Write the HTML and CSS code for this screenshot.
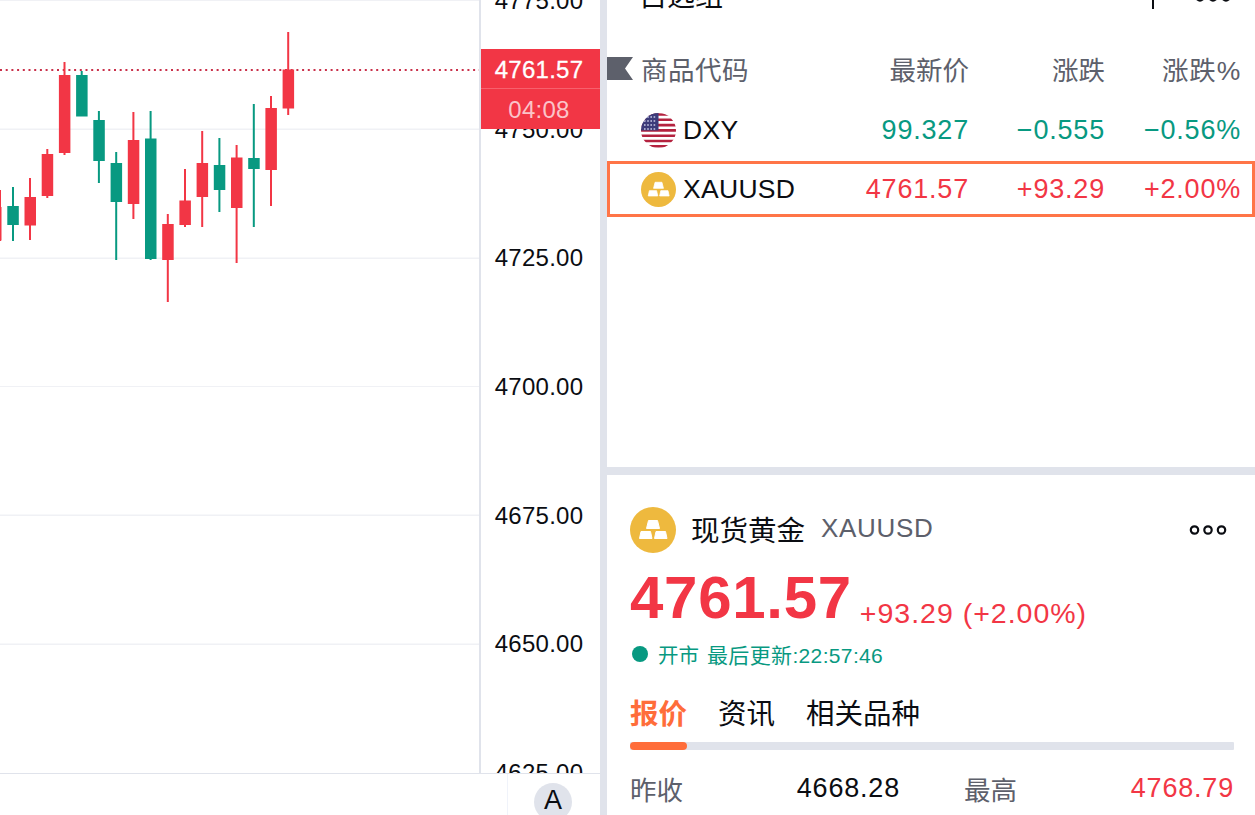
FILE: index.html
```html
<!DOCTYPE html>
<html lang="zh">
<head>
<meta charset="utf-8">
<title>XAUUSD</title>
<link rel="stylesheet" href="styles.css">
</head>
<body>
<div class="app">
  <section class="chart-col">
    <div class="chart-main">
      <div class="plot">
        <svg class="plot-svg" width="479" height="773" viewBox="0 0 479 773">
          <g class="grid">
            <rect x="0" y="0" width="479" height="1"/><rect x="0" y="128.5" width="479" height="1.5"/><rect x="0" y="257.5" width="479" height="1.5"/><rect x="0" y="386" width="479" height="1"/><rect x="0" y="514.5" width="479" height="1.5"/><rect x="0" y="643.5" width="479" height="1.5"/>
          </g>
          <line class="last" x1="0" y1="70" x2="479" y2="70"/>
          <g class="up">
            <rect x="-1" y="190" width="2" height="51"/><rect x="-10" y="207" width="11.5" height="33.5"/>
            <rect x="29" y="178" width="2" height="62"/><rect x="24.5" y="197" width="11.5" height="28.5"/>
            <rect x="46.300" y="149" width="2" height="49"/><rect x="41.700" y="154" width="11.5" height="42"/>
            <rect x="63.500" y="62" width="2" height="93"/><rect x="58.900" y="75" width="11.5" height="78"/>
            <rect x="132.400" y="112" width="2" height="107"/><rect x="127.800" y="140" width="11.5" height="64"/>
            <rect x="166.800" y="214" width="2" height="88"/><rect x="162.200" y="224" width="11.5" height="36"/>
            <rect x="184" y="169" width="2" height="58"/><rect x="179.400" y="200.500" width="11.5" height="24.500"/>
            <rect x="201.200" y="131" width="2" height="96"/><rect x="196.600" y="163" width="11.5" height="34"/>
            <rect x="235.600" y="145" width="2" height="118"/><rect x="231" y="157.500" width="11.5" height="50.500"/>
            <rect x="270" y="96" width="2" height="110"/><rect x="265.400" y="108" width="11.5" height="62"/>
            <rect x="287.200" y="32" width="2" height="83"/><rect x="282.600" y="69.500" width="11.5" height="39"/>
          </g>
          <g class="down">
            <rect x="12" y="187" width="2" height="54"/><rect x="7.300" y="206" width="11.5" height="19"/>
            <rect x="80.700" y="71" width="2" height="45"/><rect x="76.100" y="75" width="11.5" height="41.500"/>
            <rect x="97.900" y="111" width="2" height="72"/><rect x="93.300" y="120" width="11.5" height="41"/>
            <rect x="115.200" y="152" width="2" height="108"/><rect x="110.600" y="163" width="11.5" height="39"/>
            <rect x="149.600" y="111" width="2" height="149"/><rect x="145" y="138.500" width="11.5" height="120.500"/>
            <rect x="218.400" y="138" width="2" height="74"/><rect x="213.800" y="165" width="11.5" height="25"/>
            <rect x="252.800" y="104" width="2" height="123"/><rect x="248.200" y="158" width="11.5" height="11"/>
          </g>
        </svg>
      </div>
      <div class="axis">
        <div class="axis-labels">
          <div class="axis-label">4775.00</div>
          <div class="axis-label">4750.00</div>
          <div class="axis-label">4725.00</div>
          <div class="axis-label">4700.00</div>
          <div class="axis-label">4675.00</div>
          <div class="axis-label">4650.00</div>
          <div class="axis-label">4625.00</div>
        </div>
        <div class="price-tag">
          <div class="tag-price">4761.57</div>
          <div class="tag-time">04:08</div>
        </div>
      </div>
    </div>
    <div class="chart-bottom">
      <div class="auto-cell"><span class="auto-btn">A</span></div>
    </div>
  </section>

  <section class="side">
    <div class="watchlist">
      <div class="list-title">
        <span class="title-text">自选组</span>
        <div class="title-tools">
          <svg class="plus" width="24" height="24" viewBox="0 0 24 24"><path d="M12 0v24M0 12h24"/></svg>
          <svg class="dots" width="36" height="10" viewBox="0 0 36 10"><circle cx="5" cy="5" r="3.600"/><circle cx="18" cy="5" r="3.600"/><circle cx="31" cy="5" r="3.600"/></svg>
        </div>
      </div>
      <div class="row head">
        <div class="name-cell">
          <svg class="flag-mark" width="26" height="23" viewBox="0 0 26 23"><path d="M0 0h26l-8 11.500 8 11.500H0z"/></svg>
          <span class="head-name">商品代码</span>
        </div>
        <div class="num">最新价</div>
        <div class="num">涨跌</div>
        <div class="num pct-head">涨跌%</div>
      </div>
      <div class="row item">
        <div class="name-cell sym">
          <svg class="sym-icon" width="35" height="35" viewBox="0 0 35 35">
            <defs><clipPath id="flagclip"><circle cx="17.500" cy="17.500" r="17.500"/></clipPath></defs>
            <g clip-path="url(#flagclip)">
              <rect width="35" height="35" fill="#fff"/>
              <path d="M0 1.500h35M0 6.800h35M0 12.100h35M0 17.400h35M0 22.700h35M0 28h35M0 33.300h35" stroke="#b4223f" stroke-width="2.600"/>
              <rect width="17.500" height="17.500" fill="#3c3b7a"/>
              <path d="M3 4h12M3 8h12M3 12h12M3 16h12" stroke="#c9cbe6" stroke-width="1.300" stroke-dasharray="1.600 1.600"/>
            </g>
          </svg>
          <span class="sym-name">DXY</span>
        </div>
        <div class="num green">99.327</div>
        <div class="num green">−0.555</div>
        <div class="num green">−0.56%</div>
      </div>
      <div class="row item selected">
        <div class="name-cell sym">
          <svg class="sym-icon" width="35" height="35" viewBox="0 0 46 46">
            <circle cx="23" cy="23" r="23" fill="#eeb93e"/>
            <path class="bars" d="M18.500 13.500h9l2 8h-13zM11 24.500h9.500l1.500 7H9.500zM26 24.500h9.500l1.500 7H24.500z"/>
          </svg>
          <span class="sym-name">XAUUSD</span>
        </div>
        <div class="num red">4761.57</div>
        <div class="num red">+93.29</div>
        <div class="num red">+2.00%</div>
      </div>
    </div>

    <div class="detail">
      <div class="detail-head">
        <svg class="big-icon" width="46" height="46" viewBox="0 0 46 46">
          <circle cx="23" cy="23" r="23" fill="#eeb93e"/>
          <path class="bars" d="M18.500 13.500h9l2 8h-13zM11 24.500h9.500l1.500 7H9.500zM26 24.500h9.500l1.500 7H24.500z"/>
        </svg>
        <span class="detail-name">现货黄金</span>
        <span class="detail-code">XAUUSD</span>
        <svg class="dots detail-dots" width="38" height="12" viewBox="0 0 38 12"><circle cx="5.500" cy="6" r="3.700"/><circle cx="19" cy="6" r="3.700"/><circle cx="32.500" cy="6" r="3.700"/></svg>
      </div>
      <div class="price-line">
        <span class="big-price">4761.57</span>
        <span class="big-change">+93.29 (+2.00%)</span>
      </div>
      <div class="status"><i class="status-dot"></i><span>开市</span><span class="status-time">最后更新:22:57:46</span></div>
      <div class="tabs">
        <span class="tab active">报价</span>
        <span class="tab">资讯</span>
        <span class="tab">相关品种</span>
      </div>
      <div class="track"><div class="track-fill"></div></div>
      <div class="stats">
        <div class="stat"><span class="stat-label">昨收</span><span class="stat-val">4668.28</span></div>
        <div class="stat"><span class="stat-label">最高</span><span class="stat-val red">4768.79</span></div>
      </div>
    </div>
  </section>
</div>
</body>
</html>
```

FILE: styles.css
```css
* { box-sizing: border-box; }
html, body { margin: 0; height: 815px; overflow: hidden; background: #fff; }
body { font-family: "Liberation Sans", "Noto Sans CJK SC", sans-serif; color: #0b0d12; }

.app { display: flex; width: 1255px; height: 815px; overflow: hidden; }

/* chart */
.chart-col { width: 607px; flex: none; display: flex; flex-direction: column; border-right: 7px solid #e0e3eb; }
.chart-main { height: 773px; display: flex; flex: none; }
.plot { width: 479px; flex: none; }
.plot-svg { display: block; }
.grid rect { fill: #f0f1f5; }
.last { stroke: #c9304a; stroke-width: 2; stroke-dasharray: 2 3.700; }
.up rect { fill: #f23645; }
.down rect { fill: #089981; }

.axis { flex: 1; position: relative; border-left: 2px solid #e0e3eb; overflow: hidden; }
.axis-labels { margin-top: -63px; }
.axis-label { height: 128.600px; display: flex; align-items: center; justify-content: center; font-size: 24px; letter-spacing: 0.250px; padding: 0 3px 0 0; }
.price-tag { position: absolute; top: 49px; left: -1px; right: 0; height: 80px; background: #f23645; color: #fff; display: flex; flex-direction: column; }
.tag-price { height: 40px; display: flex; align-items: center; justify-content: center; font-size: 24px; letter-spacing: 0.250px; -webkit-text-stroke: 0.300px #fff; border-bottom: 1px solid #f7606d; padding: 3px 2px 0 0; }
.tag-time { flex: 1; display: flex; align-items: center; justify-content: center; font-size: 24px; letter-spacing: 0.250px; color: #fbc4c9; padding: 2px 2px 0 0; }

.chart-bottom { flex: 1; border-top: 1px solid #e0e3eb; display: flex; justify-content: flex-end; }
.auto-cell { width: 93px; border-left: 1px solid #f0f3fa; display: flex; padding: 9px 0 0 26px; }
.auto-btn { width: 38px; height: 38px; flex: none; border-radius: 50%; background: #e0e3eb; display: flex; align-items: center; justify-content: center; font-size: 27px; padding-bottom: 4px; color: #0b0d12; }

/* side */
.side { flex: 1; min-width: 0; display: flex; flex-direction: column; }
.watchlist { height: 475px; flex: none; border-bottom: 8px solid #e0e3eb; overflow: hidden; }
.list-title { height: 40px; margin-top: -23px; padding-left: 32px; display: flex; align-items: center; justify-content: space-between; }
.title-text { font-size: 28px; line-height: 40px; }
.title-tools { display: flex; align-items: center; gap: 30px; padding-right: 24px; }
.plus path { stroke: #0b0d12; stroke-width: 2; fill: none; }
.dots circle { fill: none; stroke: #0b0d12; stroke-width: 2.200; }
.flag-mark path { fill: #5d606b; }
.bars { fill: #fff; stroke: #fff; stroke-width: 1; stroke-linejoin: round; }

.row { display: grid; grid-template-columns: 1fr 136px 136px 136px; align-items: center; padding-right: 14px; }
.head { height: 65px; margin-top: 19px; font-size: 26.500px; color: #5d606b; }
.head .name-cell { gap: 8px; }
.head-name { letter-spacing: 0.500px; }
.pct-head { letter-spacing: 0.800px; }
.name-cell { display: flex; align-items: center; white-space: nowrap; }
.num { text-align: right; white-space: nowrap; }
.item { height: 59px; font-size: 27px; letter-spacing: 0.800px; }
.sym { padding-left: 34px; gap: 7px; }
.sym-name { font-size: 26.500px; letter-spacing: 0.300px; }
.selected { height: 56px; margin-top: 1px; padding-right: 11px; border: 3px solid #ff7547; }
.selected .sym { padding-left: 31px; }
.green { color: #089981; }
.red { color: #f23645; }

.detail { flex: 1; padding: 32px 21px 0 23px; min-height: 0; overflow: hidden; }
.detail-head { display: flex; align-items: center; height: 46px; }
.big-icon { flex: none; margin-right: 15px; }
.detail-name { font-size: 28.500px; padding-bottom: 4px; }
.detail-code { font-size: 26px; color: #5d606b; margin-left: 16px; letter-spacing: 0.700px; padding-bottom: 4px; }
.detail-dots { margin-left: auto; margin-right: 7px; }
.price-line { display: flex; align-items: flex-end; gap: 8px; margin-top: 12px; height: 66px; }
.big-price { font-size: 60px; font-weight: 700; line-height: 66px; color: #f23645; letter-spacing: 0.700px; }
.big-change { font-size: 28.500px; line-height: 36px; color: #f23645; letter-spacing: 1px; }
.status { display: flex; align-items: center; height: 28px; margin-top: 9px; font-size: 20.500px; color: #089981; }
.status-dot { width: 16px; height: 16px; border-radius: 50%; background: #089981; margin: 0 10px 0 2px; }
.status-time { font-size: 21px; letter-spacing: 0.350px; margin-left: 8px; }
.tabs { display: flex; gap: 31px; margin-top: 26px; font-size: 28.500px; line-height: 40px; height: 40px; }
.tab.active { color: #ff6d3a; font-weight: 700; }
.track { height: 7.500px; margin-top: 8px; background: #e0e3eb; border-radius: 1px; }
.track-fill { width: 57px; height: 100%; background: #ff6d3a; border-radius: 4px; }
.stats { display: grid; grid-template-columns: 270px 270px; gap: 64px; margin-top: 19px; }
.stat { display: flex; justify-content: space-between; align-items: center; }
.stat-label { font-size: 26.500px; color: #5d606b; }
.stat-val { font-size: 27px; letter-spacing: 0.800px; }
```
